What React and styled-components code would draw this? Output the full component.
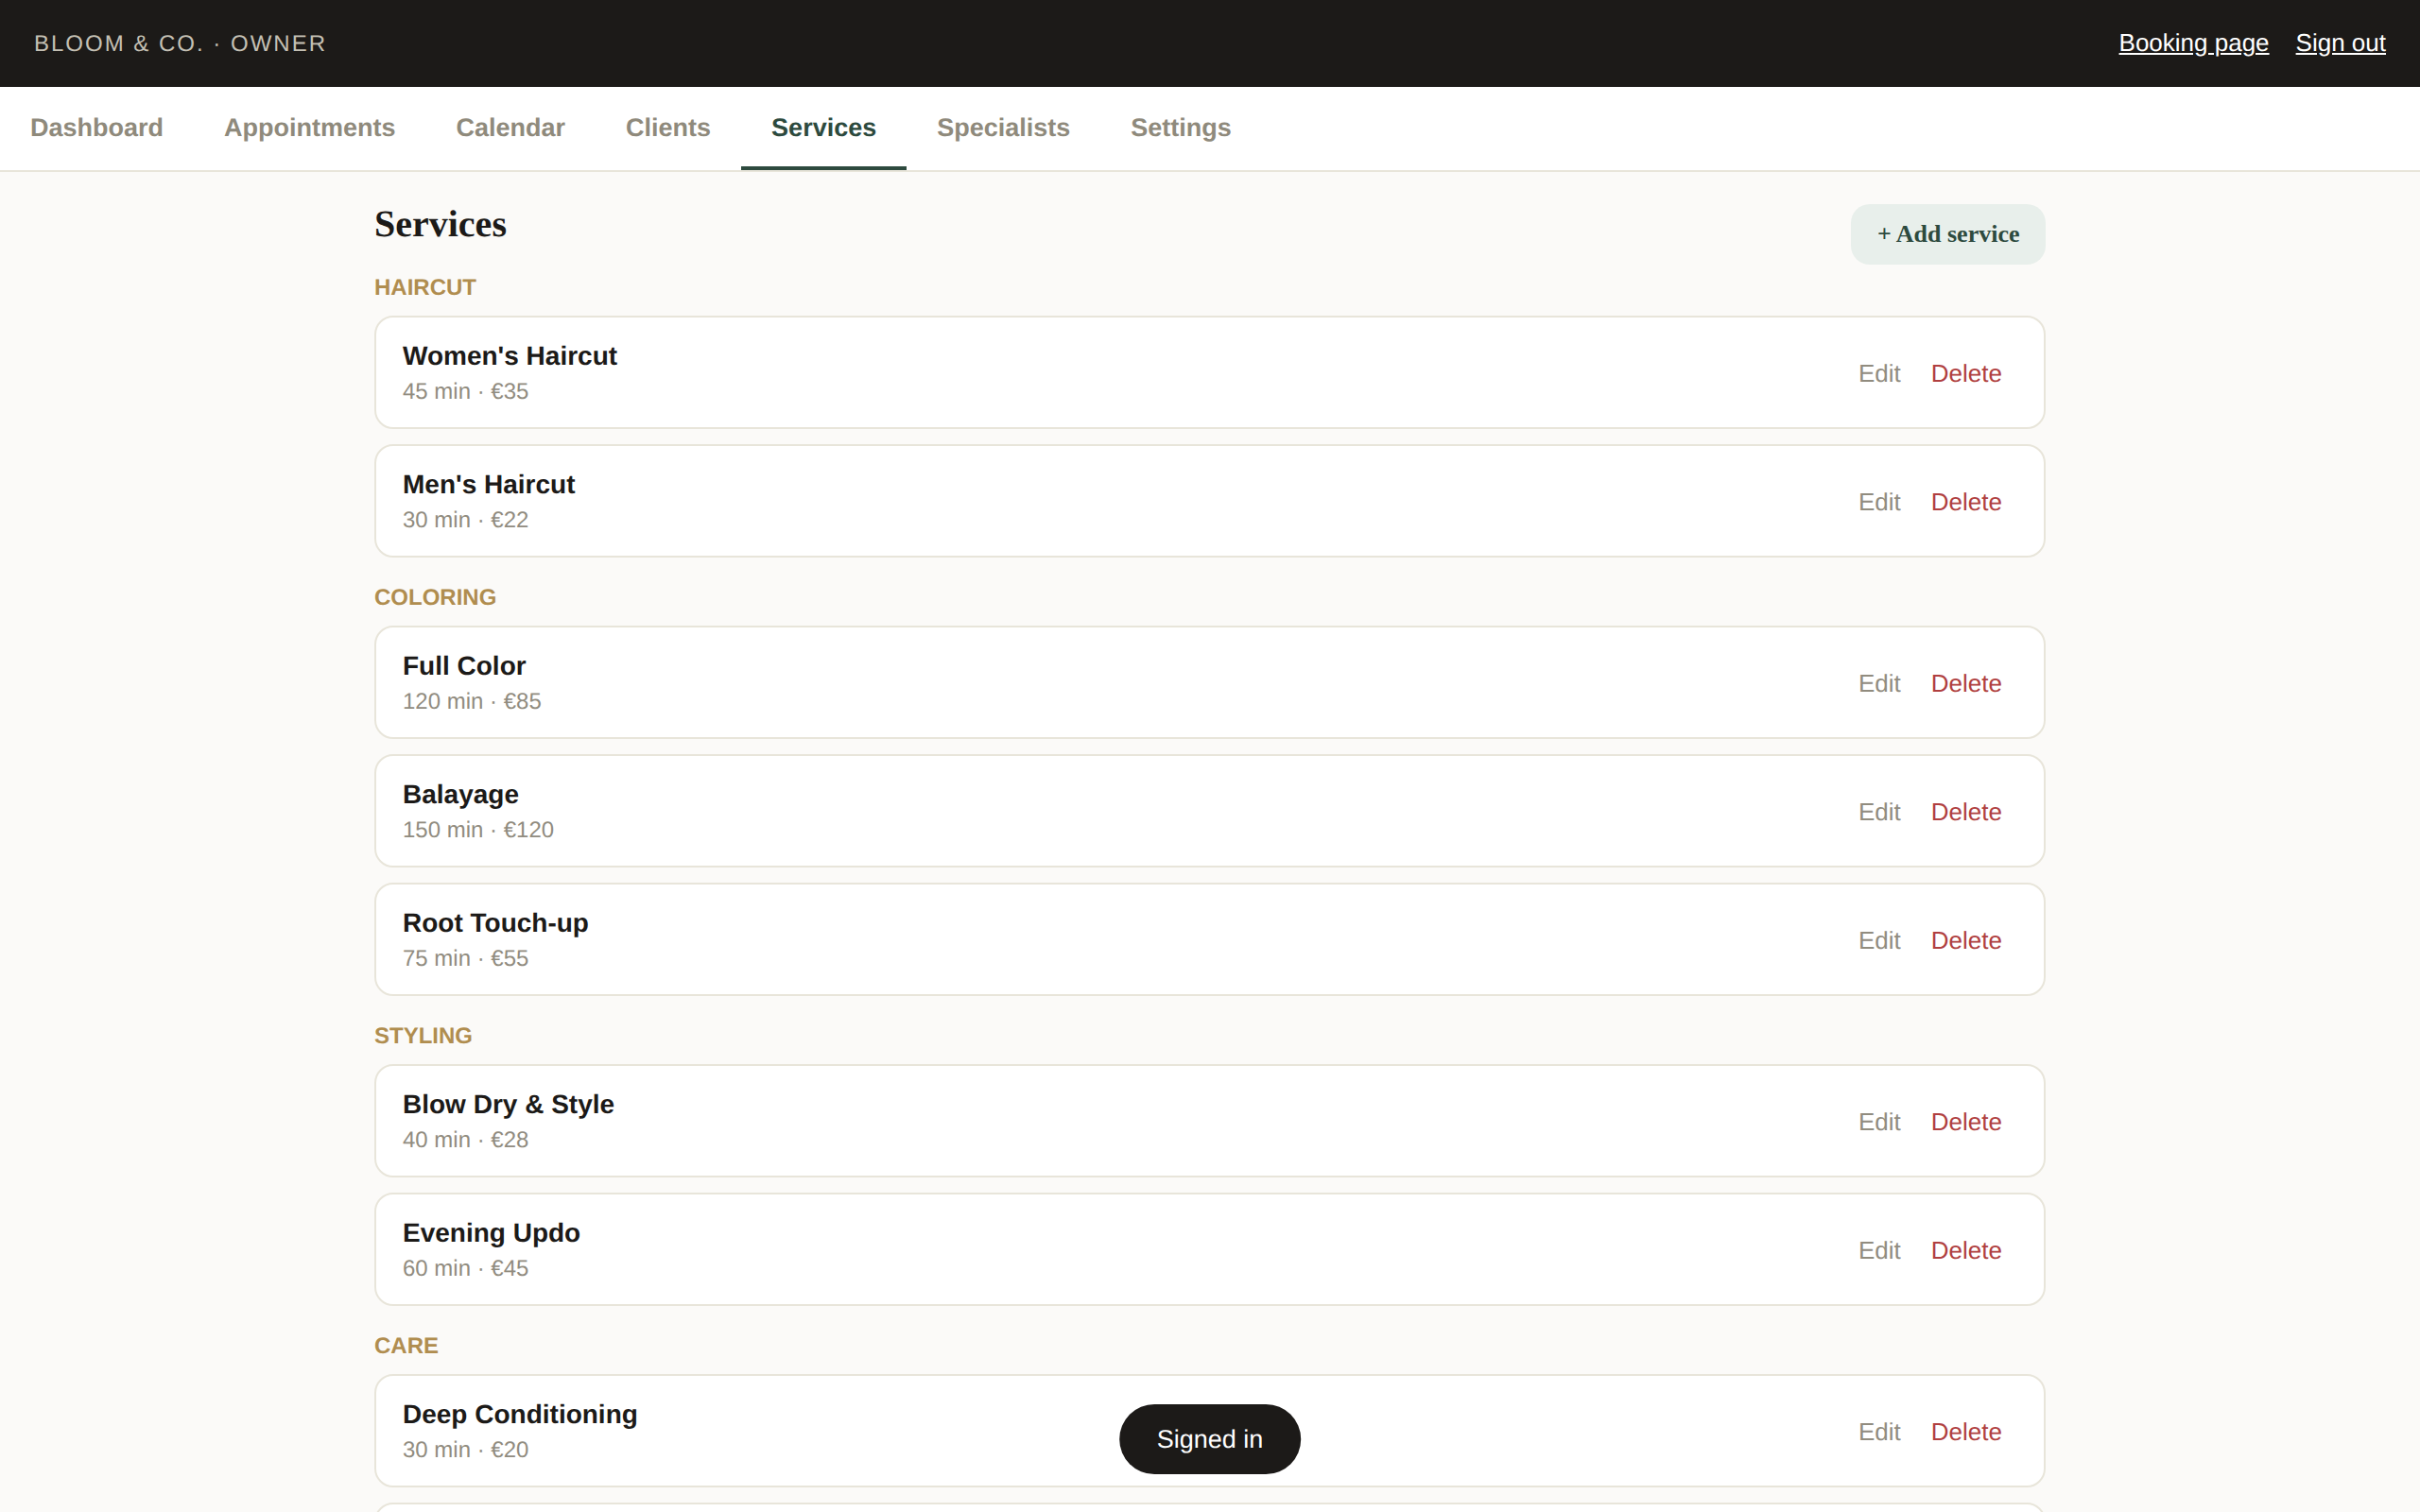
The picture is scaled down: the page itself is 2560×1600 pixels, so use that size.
import React from 'react';
import styled, { createGlobalStyle } from 'styled-components';

const GlobalStyle = createGlobalStyle`
  html, body {
    margin: 0;
    padding: 0;
    background: #fbfaf8;
    color: #1c1a18;
    font-family: "Liberation Sans", Arial, sans-serif;
    text-rendering: geometricPrecision;
  }
  * { box-sizing: border-box; }
`;

const Header = styled.header`
  display: flex;
  align-items: center;
  justify-content: space-between;
  height: 92px;
  padding: 0 36px;
  background: #1c1a18;
`;

const Brand = styled.span`
  margin-top: 1px;
  font-size: 24px;
  letter-spacing: 2px;
  color: #c4c0b4;
`;

const HeaderLinks = styled.div`
  display: flex;
  gap: 28px;
  margin-bottom: 1px;
`;

const HeaderLink = styled.a`
  font-size: 26px;
  color: #fff;
  text-decoration: underline;
`;

const Nav = styled.nav`
  display: flex;
  background: #fff;
  border-bottom: 2px solid #e8e5da;
`;

const Tab = styled.a`
  padding: 26px 32px 24px;
  height: 88px;
  font-size: 27px;
  line-height: 34px;
  font-weight: 700;
  color: ${(p) => (p.$active ? '#2d4a3e' : '#8f8a7c')};
  border-bottom: 4px solid ${(p) => (p.$active ? '#2d4a3e' : 'transparent')};
`;

const Main = styled.main`
  width: 1768px;
  margin: 0 auto;
  padding-top: 32px;
`;

const TitleRow = styled.div`
  display: flex;
  align-items: flex-start;
  justify-content: space-between;
  margin-bottom: 11px;
`;

const Title = styled.h1`
  margin: 0;
  font-family: "Liberation Serif", "Times New Roman", serif;
  font-size: 40px;
  line-height: 46px;
  font-weight: 700;
`;

const AddButton = styled.button`
  height: 64px;
  margin-top: 2px;
  padding: 0 27.5px;
  border: 0;
  border-radius: 20px;
  background: #e8efeb;
  color: #2d4a3e;
  font-family: "Liberation Serif", "Times New Roman", serif;
  font-size: 26px;
  font-weight: 700;
`;

const Section = styled.section`
  & + & {
    margin-top: 29px;
  }
`;

const SectionLabel = styled.h2`
  margin: 0 0 15px;
  font-size: 24px;
  line-height: 28px;
  font-weight: 700;
  text-transform: uppercase;
  color: #b08d4f;
`;

const CardList = styled.div`
  display: flex;
  flex-direction: column;
  gap: 16px;
`;

const Card = styled.div`
  display: flex;
  align-items: center;
  justify-content: space-between;
  height: 120px;
  padding: 0 44px 0 28px;
  background: #fff;
  border: 2px solid #e8e5da;
  border-radius: 20px;
`;

const Name = styled.div`
  font-size: 28px;
  line-height: 36px;
  font-weight: 700;
  color: #1c1a18;
`;

const Meta = styled.div`
  margin-top: 5px;
  font-size: 24px;
  line-height: 30px;
  color: #918c7f;
`;

const Actions = styled.div`
  display: flex;
  gap: 32px;
  padding-top: 2px;
`;

const Action = styled.a`
  font-size: 26px;
  color: ${(p) => (p.$danger ? '#b04040' : '#918c7f')};
`;

const Toast = styled.div`
  position: fixed;
  left: 50%;
  bottom: 40px;
  transform: translateX(-50%);
  padding: 0 39.5px;
  height: 74px;
  line-height: 74px;
  border-radius: 37px;
  background: #1c1a18;
  color: #fff;
  font-size: 27px;
`;

const tabs = ['Dashboard', 'Appointments', 'Calendar', 'Clients', 'Services', 'Specialists', 'Settings'];

const groups = [
  {
    label: 'Haircut',
    items: [
      ["Women's Haircut", '45 min · €35'],
      ["Men's Haircut", '30 min · €22'],
    ],
  },
  {
    label: 'Coloring',
    items: [
      ['Full Color', '120 min · €85'],
      ['Balayage', '150 min · €120'],
      ['Root Touch-up', '75 min · €55'],
    ],
  },
  {
    label: 'Styling',
    items: [
      ['Blow Dry & Style', '40 min · €28'],
      ['Evening Updo', '60 min · €45'],
    ],
  },
  {
    label: 'Care',
    items: [['Deep Conditioning', '30 min · €20']],
    // the next card only shows its top border at the fold
    more: true,
  },
];

const App = () => (
  <>
    <GlobalStyle />
    <Header>
      <Brand>BLOOM &amp; CO. · OWNER</Brand>
      <HeaderLinks>
        <HeaderLink>Booking page</HeaderLink>
        <HeaderLink>Sign out</HeaderLink>
      </HeaderLinks>
    </Header>
    <Nav>
      {tabs.map((tab) => (
        <Tab key={tab} $active={tab === 'Services'}>{tab}</Tab>
      ))}
    </Nav>
    <Main>
      <TitleRow>
        <Title>Services</Title>
        <AddButton>+ Add service</AddButton>
      </TitleRow>
      {groups.map((group) => (
        <Section key={group.label}>
          <SectionLabel>{group.label}</SectionLabel>
          <CardList>
            {group.items.map(([name, meta]) => (
              <Card key={name}>
                <div>
                  <Name>{name}</Name>
                  <Meta>{meta}</Meta>
                </div>
                <Actions>
                  <Action>Edit</Action>
                  <Action $danger>Delete</Action>
                </Actions>
              </Card>
            ))}
            {group.more && <Card />}
          </CardList>
        </Section>
      ))}
    </Main>
    <Toast>Signed in</Toast>
  </>
);

export default App;
